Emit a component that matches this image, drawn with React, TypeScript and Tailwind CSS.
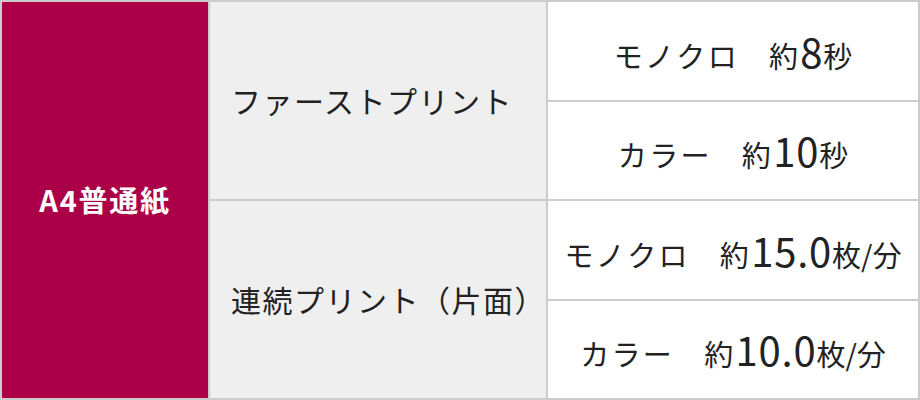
const font = { fontFamily: '"Noto Sans CJK JP", "Noto Sans", sans-serif' };

type Spec = { label: string; rows: { kind: string; num: string; unit: string }[] };

const specs: Spec[] = [
  {
    label: "ファーストプリント",
    rows: [
      { kind: "モノクロ", num: "8", unit: "秒" },
      { kind: "カラー", num: "10", unit: "秒" },
    ],
  },
  {
    label: "連続プリント（片面）",
    rows: [
      { kind: "モノクロ", num: "15.0", unit: "枚/分" },
      { kind: "カラー", num: "10.0", unit: "枚/分" },
    ],
  },
];

function Value({ kind, num, unit }: { kind: string; num: string; unit: string }) {
  return (
    <div className="bg-white flex items-center justify-center">
      <div className="flex items-baseline text-[29px] text-[#222] tracking-[0.08em] leading-none">
        <span>{kind}</span>
        <span className="ml-[30px]">約</span>
        <span className="text-[40px] tracking-[0.02em]">{num}</span>
        <span className="tracking-normal">{unit}</span>
      </div>
    </div>
  );
}

export default function App() {
  return (
    <div
      style={font}
      className="w-[920px] h-[400px] bg-[#cccccc] p-[2px] grid grid-cols-[206px_336px_370px] grid-rows-4 gap-[2px]"
    >
      <div className="row-span-4 row-start-1 col-start-1 bg-[#ab0047] flex items-center justify-center text-white font-bold text-[29px] tracking-[0.06em]">
        A4普通紙
      </div>
      {specs.map((s, i) => (
        <div
          key={s.label}
          className={`col-start-2 row-span-2 ${i === 0 ? "row-start-1" : "row-start-3"} bg-[#efefef] flex items-center pl-[21px] text-[30px] text-[#222] tracking-[0.05em]`}
        >
          {s.label}
        </div>
      ))}
      {specs.flatMap((s) => s.rows).map((r, i) => (
        <div key={i} className="col-start-3 grid" style={{ gridRowStart: i + 1 }}>
          <Value {...r} />
        </div>
      ))}
    </div>
  );
}
